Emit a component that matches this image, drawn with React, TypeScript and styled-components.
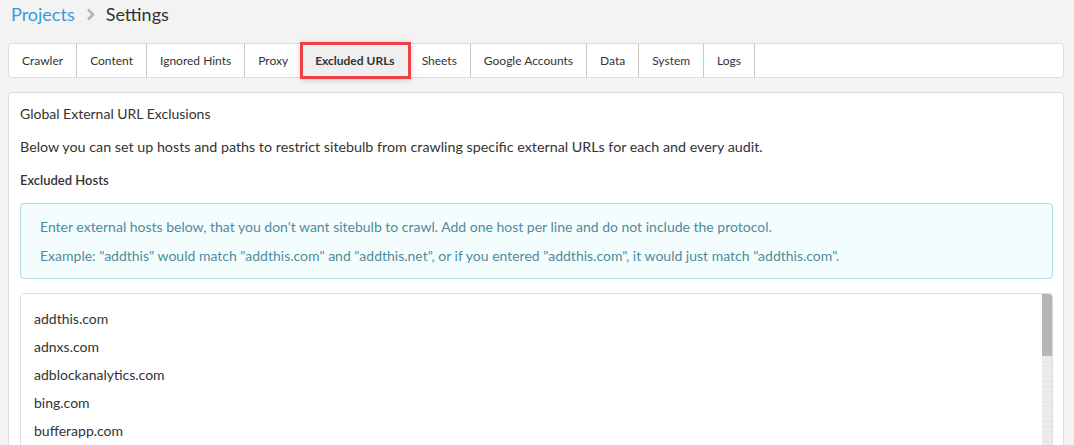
import React from 'react';
import styled, { createGlobalStyle } from 'styled-components';

const GlobalStyle = createGlobalStyle`
  html, body {
    margin: 0;
    padding: 0;
    background: #f3f3f3;
    font-family: Lato, "Open Sans", sans-serif;
    color: #333;
  }
`;

const SPage = styled.div`
  padding: 0 10px 0 8px;
`;

const SBreadcrumb = styled.div`
  display: flex;
  align-items: center;
  height: 28px;
  padding-left: 3px;
  font-size: 18px;
  line-height: 28px;
`;

const SCrumbLink = styled.a`
  color: #3a9ad9;
  text-decoration: none;
  cursor: pointer;
`;

const SChevron = styled.svg`
  margin: 0 11px 0 11px;
  width: 9px;
  height: 13px;
`;

const SCrumbCurrent = styled.span`
  color: #333;
`;

const STabBar = styled.div`
  display: flex;
  margin-top: 15px;
  height: 33px;
  background: #fff;
  border: 1px solid #ddd;
  border-radius: 4px;
`;

const STab = styled.button<{ $active?: boolean }>`
  position: relative;
  padding: 0 13px;
  border: none;
  border-right: 1px solid #c8c8c8;
  background: ${(p) => (p.$active ? '#efefef' : 'transparent')};
  font-family: inherit;
  font-size: 12px;
  font-weight: ${(p) => (p.$active ? 700 : 400)};
  color: #333;
  cursor: pointer;
  white-space: nowrap;
  outline: ${(p) => (p.$active ? '3px solid #ef4148' : 'none')};
  outline-offset: -1px;
  box-shadow: ${(p) => (p.$active ? '0 1px 7px rgba(0, 0, 0, 0.35)' : 'none')};
  z-index: ${(p) => (p.$active ? 1 : 0)};
`;

const SPanel = styled.div`
  margin-top: 14px;
  background: #fff;
  border: 1px solid #ddd;
  border-radius: 4px;
  padding: 11px 10px 12px 11px;
`;

const STitle = styled.div`
  font-size: 14px;
  line-height: 20px;
`;

const SDescription = styled.p`
  margin: 13px 0 0;
  font-size: 14.3px;
  line-height: 20px;
`;

const SSubHeading = styled.div`
  margin-top: 13px;
  font-size: 13px;
  font-weight: 600;
  line-height: 20px;
`;

const SInfo = styled.div`
  margin-top: 13px;
  background: #f4fdfe;
  border: 1px solid #b3dbe3;
  border-radius: 4px;
  padding: 13px 19px 12px;
  color: #4f8b9c;
  font-size: 14px;
  line-height: 20px;
  display: flex;
  flex-direction: column;
  gap: 9px;
`;

const SHostsBox = styled.div`
  display: flex;
  height: 300px;
  margin-top: 14px;
  border: 1px solid #ddd;
  border-radius: 4px;
  overflow: hidden;
`;

const SHosts = styled.textarea`
  flex: 1;
  box-sizing: border-box;
  padding: 11px 13px;
  border: none;
  font-family: inherit;
  font-size: 14px;
  line-height: 28px;
  color: #333;
  resize: none;
  outline: none;
  overflow: hidden;
`;

const SScrollTrack = styled.div`
  width: 10px;
  background-color: #ececec;
  background-image: radial-gradient(#dcdcdc 0.6px, transparent 0.8px);
  background-size: 4px 5px;
`;

const SScrollThumb = styled.div`
  height: 62px;
  background: #b6b6b6;
`;

const tabs = [
  'Crawler',
  'Content',
  'Ignored Hints',
  'Proxy',
  'Excluded URLs',
  'Sheets',
  'Google Accounts',
  'Data',
  'System',
  'Logs',
];

const hosts = [
  'addthis.com',
  'adnxs.com',
  'adblockanalytics.com',
  'bing.com',
  'bufferapp.com',
  'chartbeat.com',
  'chartbeat.net',
  'clicktale.net',
  'criteo.com',
  'crwdcntrl.net',
  'disqus.com',
  'doubleclick.net',
  'facebook.com',
  'facebook.net',
];

export default function App() {
  return (
    <SPage>
      <GlobalStyle />
      <SBreadcrumb>
        <SCrumbLink>Projects</SCrumbLink>
        <SChevron viewBox="0 0 9 13">
          <path d="M2 1.5 L7 6.5 L2 11.5" fill="none" stroke="#b4b4b4" strokeWidth="2.6" />
        </SChevron>
        <SCrumbCurrent>Settings</SCrumbCurrent>
      </SBreadcrumb>

      <STabBar>
        {tabs.map((t) => (
          <STab key={t} $active={t === 'Excluded URLs'}>
            {t}
          </STab>
        ))}
      </STabBar>

      <SPanel>
        <STitle>Global External URL Exclusions</STitle>
        <SDescription>
          Below you can set up hosts and paths to restrict sitebulb from crawling specific external URLs
          for each and every audit.
        </SDescription>
        <SSubHeading>Excluded Hosts</SSubHeading>
        <SInfo>
          <div>
            Enter external hosts below, that you don't want sitebulb to crawl. Add one host per line and do
            not include the protocol.
          </div>
          <div>
            Example: "addthis" would match "addthis.com" and "addthis.net", or if you entered "addthis.com",
            it would just match "addthis.com".
          </div>
        </SInfo>
        <SHostsBox>
          <SHosts readOnly value={hosts.join('\n')} spellCheck={false} />
          <SScrollTrack>
            <SScrollThumb />
          </SScrollTrack>
        </SHostsBox>
      </SPanel>
    </SPage>
  );
}
